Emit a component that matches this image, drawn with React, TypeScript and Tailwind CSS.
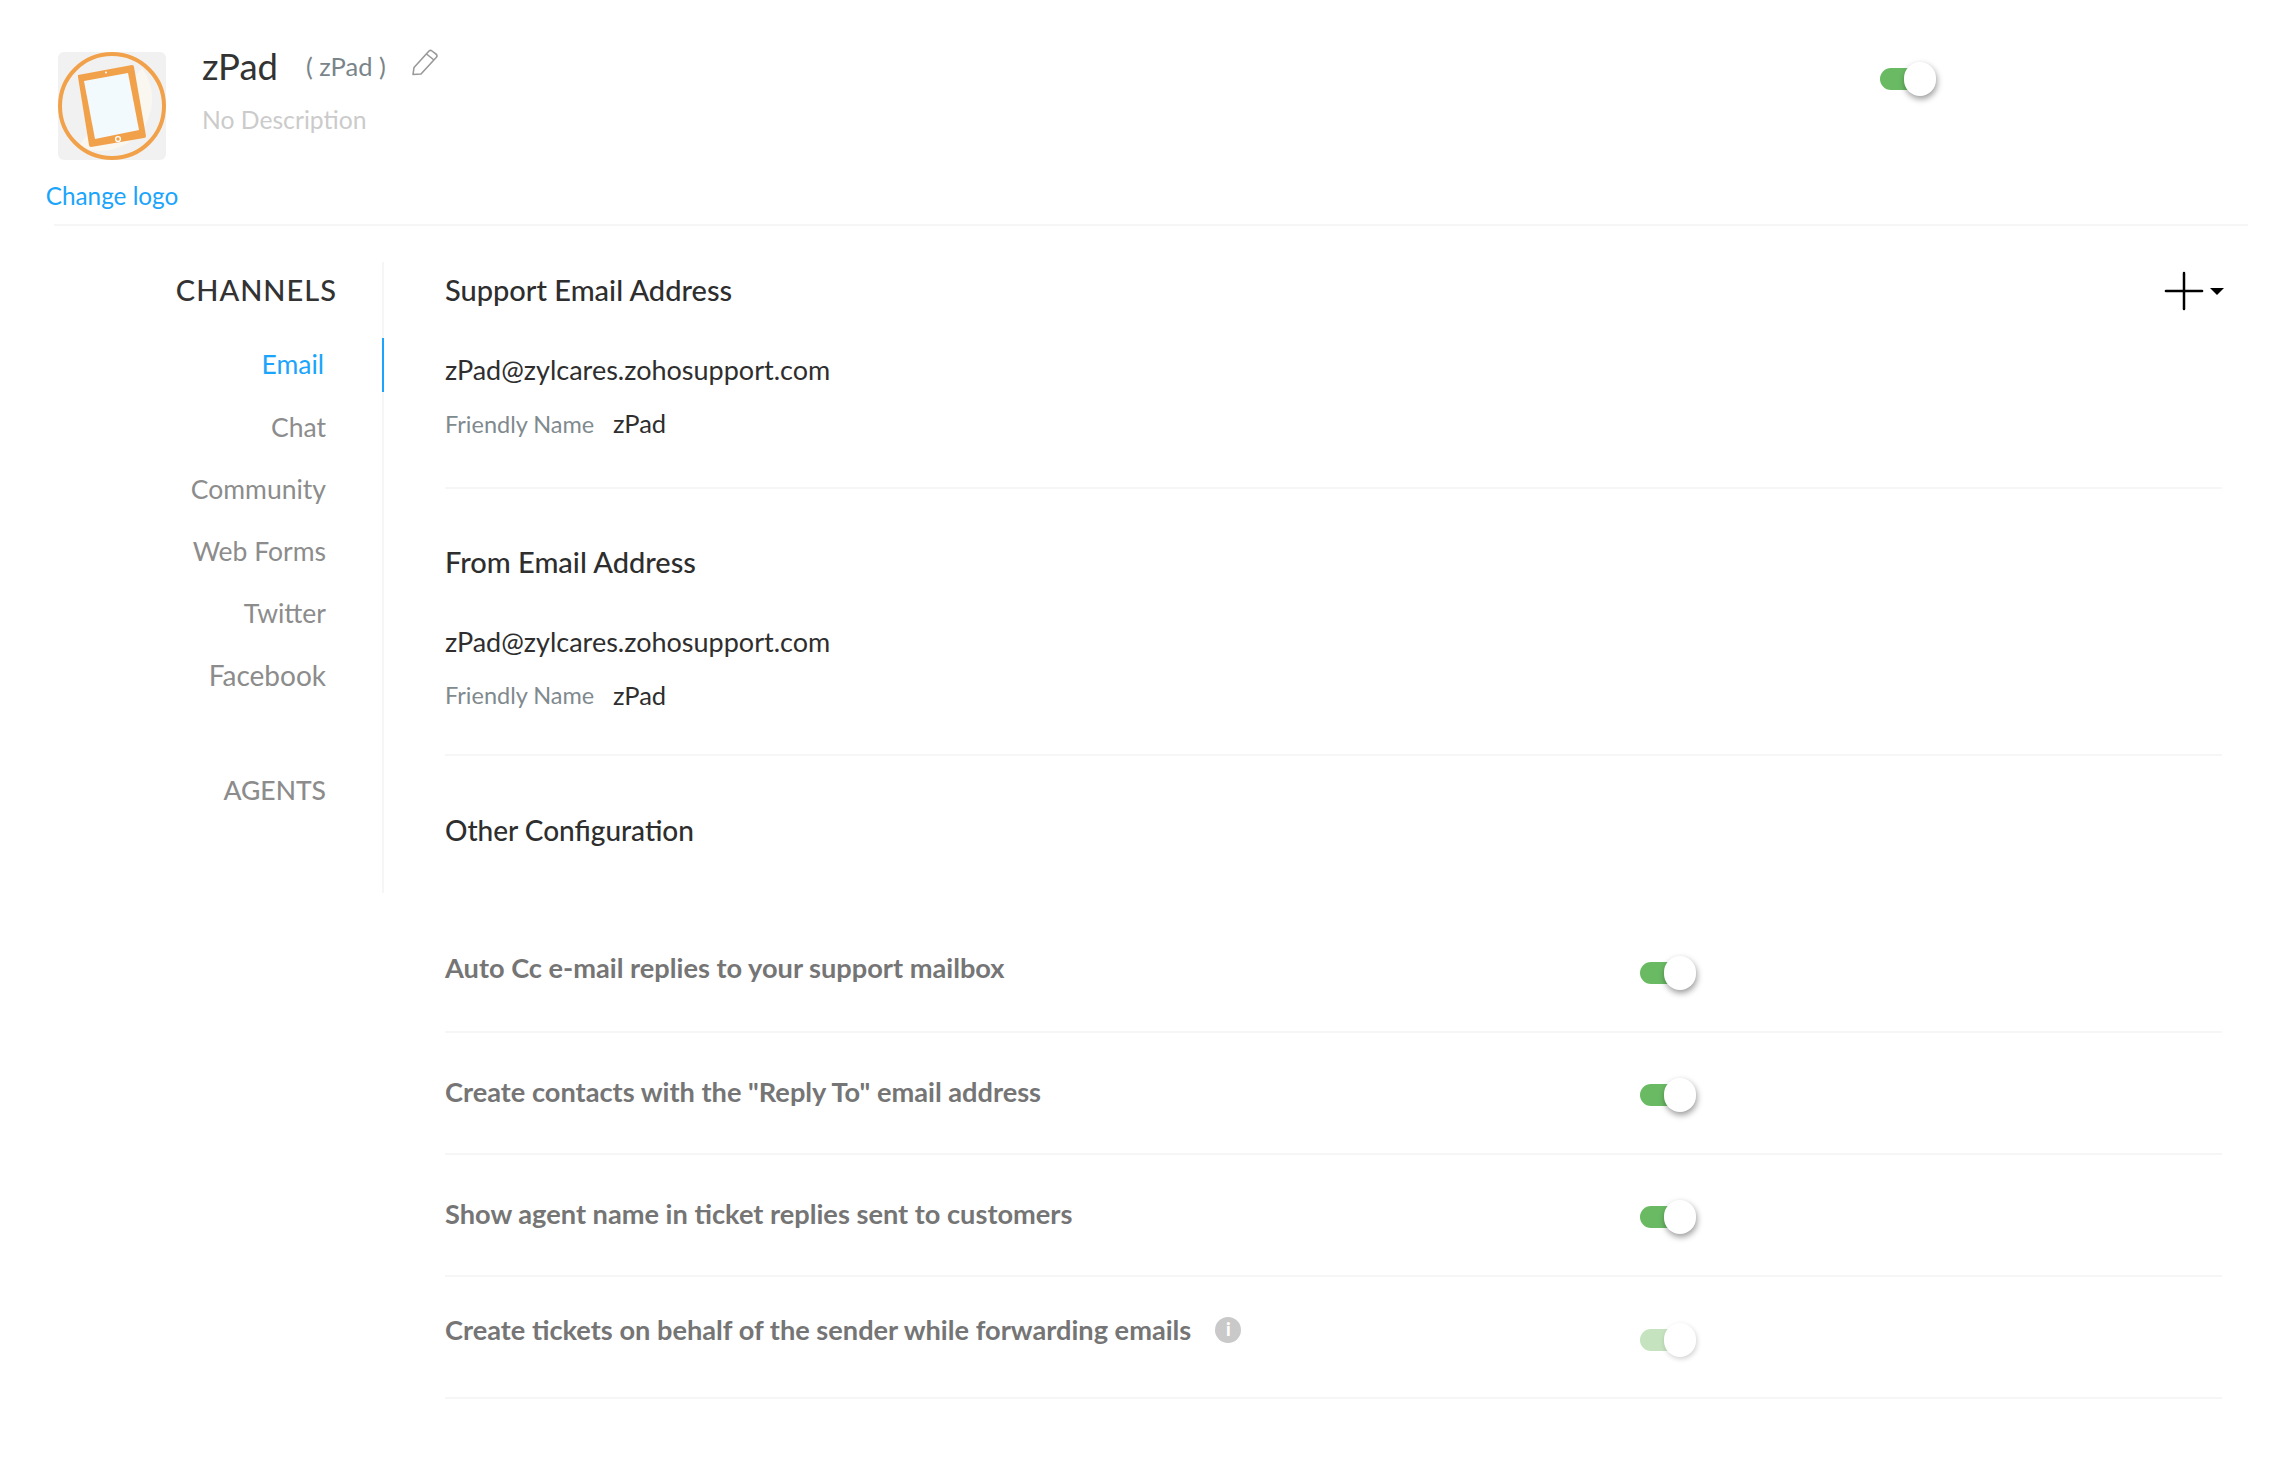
import React from 'react';
import { Plus } from 'lucide-react';

const FONT = "font-['Lato','Open_Sans',sans-serif]";

const channels = ['Chat', 'Community', 'Web Forms', 'Twitter'];

const rows = [
  { label: 'Auto Cc e-mail replies to your support mailbox', toggleClass: 'mt-[4px]', textClass: '-mt-[6px]' },
  { label: 'Create contacts with the "Reply To" email address', toggleClass: 'mt-[3px]', textClass: '-mt-[2px]' },
  { label: 'Show agent name in ticket replies sent to customers', toggleClass: 'mt-[3px]', textClass: '-mt-[1px]' },
  { label: 'Create tickets on behalf of the sender while forwarding emails', toggleClass: 'mt-[6px]', textClass: '-mt-[14px]', info: true, faded: true },
];

function Toggle({ faded = false }: { faded?: boolean }) {
  return (
    <div className="flex items-center w-[56px] h-[34px]">
      <div className={`w-[40px] h-[22px] rounded-full ${faded ? 'bg-[#c5e3bf]' : 'bg-[#6aba64]'}`} />
      <div className={`-ml-[16px] w-[32px] h-[34px] rounded-full bg-white ${faded ? 'shadow-[1px_2px_5px_rgba(0,0,0,0.18)]' : 'shadow-[1px_3px_6px_rgba(0,0,0,0.4)]'}`} />
    </div>
  );
}

function Logo() {
  return (
    <svg width="108" height="108" viewBox="0 0 108 108" className="shrink-0 rounded-[6px] bg-[#f1f1f1]">
      <circle cx="54" cy="54" r="52" fill="#f1f1f1" />
      <path d="M84 16 A52 52 0 0 1 20 94 Z" fill="#faf6f0" />
      <circle cx="54" cy="54" r="52" fill="none" stroke="#f2a14b" strokeWidth="4" />
      <path d="M20 23 L74 13 Q76 13 76 15 L88 84 Q88 86 86 86 L33 95 Q31 95 31 93 L20 25 Q20 23 20 23 Z" fill="#f2a14b" />
      <path d="M26 29 L70 21 L81 78 L37 87 Z" fill="#f3fafe" />
      <circle cx="60" cy="87" r="2.4" fill="#f2a14b" stroke="#fff" strokeWidth="1.4" />
      <circle cx="48" cy="20.5" r="1" fill="#fff" />
    </svg>
  );
}

function Pencil() {
  return (
    <svg width="26" height="27" viewBox="0 0 26 27" fill="none" stroke="#999" strokeWidth="1.6" strokeLinejoin="round">
      <path d="M1 25.5 L2 18.5 L17 2 Q18.5 0.8 20 2 L24.5 5.5 Q25.5 7 24.4 8.2 L9 25 Z" />
      <path d="M14.5 5 L22 11" />
    </svg>
  );
}

function EmailBlock({ title, labelClass, nameClass }: { title: string; labelClass: string; nameClass: string }) {
  return (
    <>
      <div className="flex items-center justify-between h-[40px]">
        <h2 className="text-[29px] font-medium text-[#2e2e2e]">{title}</h2>
      </div>
      <div className="mt-[40px] text-[27px] leading-[40px] text-[#2e2e2e]">zPad@zylcares.zohosupport.com</div>
      <div className="flex items-center mt-[14px] h-[40px]">
        <span className={`text-[23.5px] text-[#7f8a8f] w-[168px] ${labelClass}`}>Friendly Name</span>
        <span className={`text-[25.5px] text-[#2e2e2e] ${nameClass}`}>zPad</span>
      </div>
    </>
  );
}

export default function App() {
  return (
    <div className={`${FONT} w-[2292px] h-[1462px] bg-white overflow-hidden`}>
      <header className="flex items-start ml-[54px] mr-[44px] h-[226px] border-b-2 border-[#f6f6f6]">
        <div className="flex flex-col items-center -ml-[7px] w-[130px] pt-[52px]">
          <Logo />
          <a className="mt-[20px] text-[24.3px] leading-[32px] text-[#1ba4fb] whitespace-nowrap">Change logo</a>
        </div>
        <div className="ml-[25px] pt-[44px]">
          <div className="flex items-center h-[44px]">
            <span className="text-[36.5px] text-[#333]">zPad</span>
            <span className="ml-[28px] text-[25.5px] text-[#7a858a]">( zPad )</span>
            <span className="ml-[26px] -mt-[8px]"><Pencil /></span>
          </div>
          <p className="mt-[12px] text-[24.7px] leading-[40px] text-[#cbcbcb]">No Description</p>
        </div>
        <div className="ml-auto mr-[312px] pt-[62px]">
          <Toggle />
        </div>
      </header>

      <div className="flex items-start">
        <aside className="flex flex-col items-end w-[384px] h-[631px] mt-[36px] border-r-2 border-[#f6f6f6]">
          <h3 className="mr-[45px] mt-[8px] text-[29px] leading-[40px] tracking-[1px] font-medium text-[#333]">CHANNELS</h3>
          <div className="-mr-[2px] mt-[28px] flex items-center h-[54px] pr-[58px] border-r-2 border-[#1ba4fb] text-[26.5px] text-[#1ba4fb]">Email</div>
          <nav className="flex flex-col items-end mr-[56px] mt-[15px] gap-[22px]">
            {channels.map((c) => (
              <a key={c} className="h-[40px] leading-[40px] text-[26.5px] text-[#8c8c8c]">{c}</a>
            ))}
            <a className="h-[40px] leading-[40px] text-[28px] text-[#8c8c8c]">Facebook</a>
          </nav>
          <div className="mr-[56px] mt-[75px] h-[40px] leading-[40px] text-[26.5px] font-medium text-[#8c8c8c]">AGENTS</div>
        </aside>

        <main className="flex-1 pl-[61px] pr-[70px]">
          <section className="relative h-[263px] pt-[44px] border-b-2 border-[#f6f6f6]">
            <EmailBlock title="Support Email Address" labelClass="mt-[2px]" nameClass="-mt-[1px]" />
            <div className="absolute right-[-2px] top-[47px] flex items-center gap-[8px]">
              <Plus size={62} strokeWidth={2.5} absoluteStrokeWidth className="text-black -m-[13px]" />
              <span className="w-0 h-0 border-x-[7px] border-x-transparent border-t-[7px] border-t-black" />
            </div>
          </section>
          <section className="h-[267px] pt-[53px] border-b-2 border-[#f6f6f6]">
            <EmailBlock title="From Email Address" labelClass="" nameClass="-mt-[2px]" />
          </section>
          <section className="h-[155px] pt-[54px]">
            <h2 className="text-[28px] leading-[40px] font-medium text-[#2e2e2e]">Other Configuration</h2>
          </section>
          {rows.map((r) => (
            <div key={r.label} className="flex items-center h-[122px] border-b-2 border-[#f6f6f6]">
              <div className={`flex items-center w-[1195px] ${r.textClass}`}>
                <span className="text-[27.2px] font-bold text-[#757575]">{r.label}</span>
                {r.info && (
                  <span className="ml-[24px] flex items-center justify-center w-[26px] h-[26px] rounded-full bg-[#c9c9c9] text-white text-[18px] font-black">i</span>
                )}
              </div>
              <div className={r.toggleClass}>
                <Toggle faded={r.faded} />
              </div>
            </div>
          ))}
        </main>
      </div>
    </div>
  );
}
